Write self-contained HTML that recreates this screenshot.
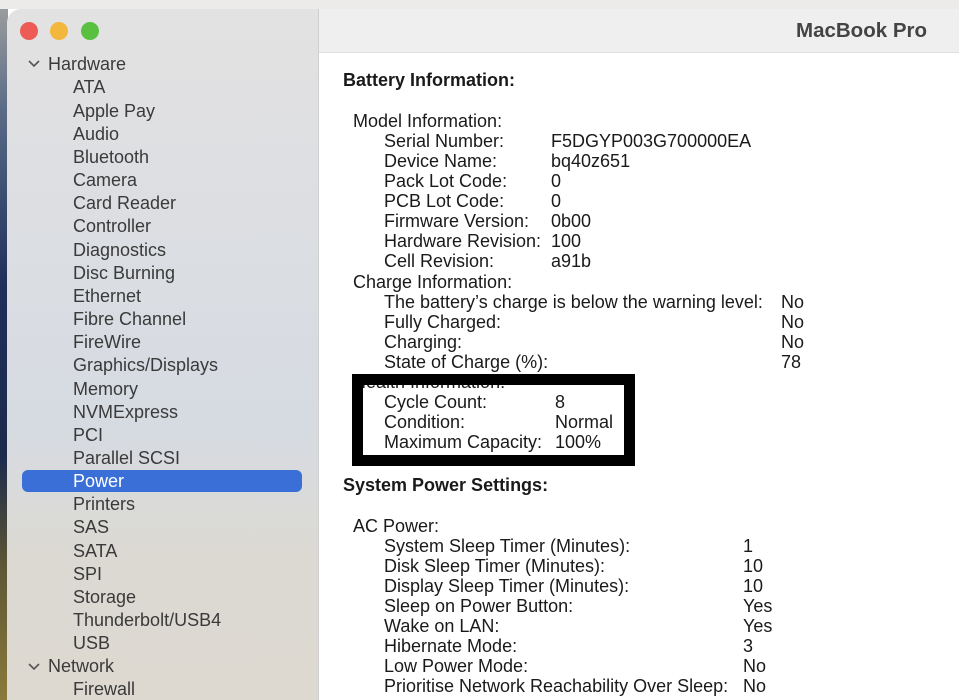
<!DOCTYPE html>
<html><head><meta charset="utf-8"><style>
*{margin:0;padding:0;box-sizing:border-box}
body{width:959px;height:700px;overflow:hidden;position:relative;background:#fff;font-family:"Liberation Sans",sans-serif;color:#1a1a1a}
.t{position:absolute;font-size:18px;line-height:20px;white-space:nowrap}
.s{position:absolute;font-size:18px;line-height:20px;color:#3a3a3a;white-space:nowrap}
b{font-weight:bold}
</style></head><body>
<div style="position:absolute;left:0;top:0;width:959px;height:9px;background:#ecebe9"></div>
<div style="position:absolute;left:0;top:9px;width:8px;height:691px;background:linear-gradient(#9a9c9e 0%,#5a6a86 15%,#1f2f5a 40%,#1c2a4c 65%,#5b5535 80%,#8a7a3a 100%)"></div>
<div style="position:absolute;left:7px;top:9px;width:312px;height:691px;border-top-left-radius:14px;background:linear-gradient(#e3e2e2 0%,#dcdee2 30%,#d6dbe2 60%,#dcd9d2 80%,#ddd9d1 100%);border-right:1px solid #cfcfcf"></div>
<div style="position:absolute;left:319px;top:9px;width:640px;height:44px;background:#efefef;border-bottom:1px solid #e0e0e0"></div>
<div style="position:absolute;left:20px;top:22px;width:18px;height:18px;border-radius:50%;background:#ec5b55"></div>
<div style="position:absolute;left:50px;top:22px;width:18px;height:18px;border-radius:50%;background:#f4b73d"></div>
<div style="position:absolute;left:81px;top:22px;width:18px;height:18px;border-radius:50%;background:#5ac140"></div>
<div style="position:absolute;left:796px;top:19px;font-size:20.5px;font-weight:bold;color:#444">MacBook Pro</div>
<div style="position:absolute;left:22px;top:470px;width:280px;height:22px;border-radius:6px;background:#3a6fd8"></div>
<svg style="position:absolute;left:28px;top:60px" width="12" height="8"><path d="M1 1l5 5 5-5" stroke="#555" stroke-width="1.6" fill="none"/></svg>
<svg style="position:absolute;left:28px;top:663px" width="12" height="8"><path d="M1 1l5 5 5-5" stroke="#555" stroke-width="1.6" fill="none"/></svg>
<div class="s" style="left:48px;top:54px">Hardware</div>
<div class="s" style="left:73px;top:77px">ATA</div>
<div class="s" style="left:73px;top:101px">Apple Pay</div>
<div class="s" style="left:73px;top:124px">Audio</div>
<div class="s" style="left:73px;top:147px">Bluetooth</div>
<div class="s" style="left:73px;top:170px">Camera</div>
<div class="s" style="left:73px;top:193px">Card Reader</div>
<div class="s" style="left:73px;top:216px">Controller</div>
<div class="s" style="left:73px;top:240px">Diagnostics</div>
<div class="s" style="left:73px;top:263px">Disc Burning</div>
<div class="s" style="left:73px;top:286px">Ethernet</div>
<div class="s" style="left:73px;top:309px">Fibre Channel</div>
<div class="s" style="left:73px;top:332px">FireWire</div>
<div class="s" style="left:73px;top:355px">Graphics/Displays</div>
<div class="s" style="left:73px;top:379px">Memory</div>
<div class="s" style="left:73px;top:402px">NVMExpress</div>
<div class="s" style="left:73px;top:425px">PCI</div>
<div class="s" style="left:73px;top:448px">Parallel SCSI</div>
<div class="s" style="left:73px;top:471px;color:#fff">Power</div>
<div class="s" style="left:73px;top:494px">Printers</div>
<div class="s" style="left:73px;top:517px">SAS</div>
<div class="s" style="left:73px;top:541px">SATA</div>
<div class="s" style="left:73px;top:564px">SPI</div>
<div class="s" style="left:73px;top:587px">Storage</div>
<div class="s" style="left:73px;top:610px">Thunderbolt/USB4</div>
<div class="s" style="left:73px;top:633px">USB</div>
<div class="s" style="left:48px;top:656px">Network</div>
<div class="s" style="left:73px;top:679px">Firewall</div>

<div class="t" style="left:343px;top:70px"><b>Battery Information:</b></div>
<div class="t" style="left:353px;top:111px">Model Information:</div>
<div class="t" style="left:384px;top:131px">Serial Number:</div><div class="t" style="left:551px;top:131px">F5DGYP003G700000EA</div>
<div class="t" style="left:384px;top:151px">Device Name:</div><div class="t" style="left:551px;top:151px">bq40z651</div>
<div class="t" style="left:384px;top:171px">Pack Lot Code:</div><div class="t" style="left:551px;top:171px">0</div>
<div class="t" style="left:384px;top:191px">PCB Lot Code:</div><div class="t" style="left:551px;top:191px">0</div>
<div class="t" style="left:384px;top:211px">Firmware Version:</div><div class="t" style="left:551px;top:211px">0b00</div>
<div class="t" style="left:384px;top:231px">Hardware Revision:</div><div class="t" style="left:551px;top:231px">100</div>
<div class="t" style="left:384px;top:251px">Cell Revision:</div><div class="t" style="left:551px;top:251px">a91b</div>
<div class="t" style="left:353px;top:272px">Charge Information:</div>
<div class="t" style="left:384px;top:292px">The battery’s charge is below the warning level:</div><div class="t" style="left:781px;top:292px">No</div>
<div class="t" style="left:384px;top:312px">Fully Charged:</div><div class="t" style="left:781px;top:312px">No</div>
<div class="t" style="left:384px;top:332px">Charging:</div><div class="t" style="left:781px;top:332px">No</div>
<div class="t" style="left:384px;top:352px">State of Charge (%):</div><div class="t" style="left:781px;top:352px">78</div>
<div style="position:absolute;left:352px;top:374px;width:283px;height:92px;border:11px solid #000;background:#fff;overflow:hidden">
<div class="t" style="left:-10px;top:-13px">Health Information:</div>
<div class="t" style="left:21px;top:7px">Cycle Count:</div><div class="t" style="left:192px;top:7px">8</div>
<div class="t" style="left:21px;top:27px">Condition:</div><div class="t" style="left:192px;top:27px">Normal</div>
<div class="t" style="left:21px;top:47px">Maximum Capacity:</div><div class="t" style="left:192px;top:47px">100%</div>
</div>
<div class="t" style="left:343px;top:475px"><b>System Power Settings:</b></div>
<div class="t" style="left:353px;top:516px">AC Power:</div>
<div class="t" style="left:384px;top:536px">System Sleep Timer (Minutes):</div><div class="t" style="left:743px;top:536px">1</div>
<div class="t" style="left:384px;top:556px">Disk Sleep Timer (Minutes):</div><div class="t" style="left:743px;top:556px">10</div>
<div class="t" style="left:384px;top:576px">Display Sleep Timer (Minutes):</div><div class="t" style="left:743px;top:576px">10</div>
<div class="t" style="left:384px;top:596px">Sleep on Power Button:</div><div class="t" style="left:743px;top:596px">Yes</div>
<div class="t" style="left:384px;top:616px">Wake on LAN:</div><div class="t" style="left:743px;top:616px">Yes</div>
<div class="t" style="left:384px;top:636px">Hibernate Mode:</div><div class="t" style="left:743px;top:636px">3</div>
<div class="t" style="left:384px;top:656px">Low Power Mode:</div><div class="t" style="left:743px;top:656px">No</div>
<div class="t" style="left:384px;top:676px">Prioritise Network Reachability Over Sleep:</div><div class="t" style="left:743px;top:676px">No</div>
</body></html>
